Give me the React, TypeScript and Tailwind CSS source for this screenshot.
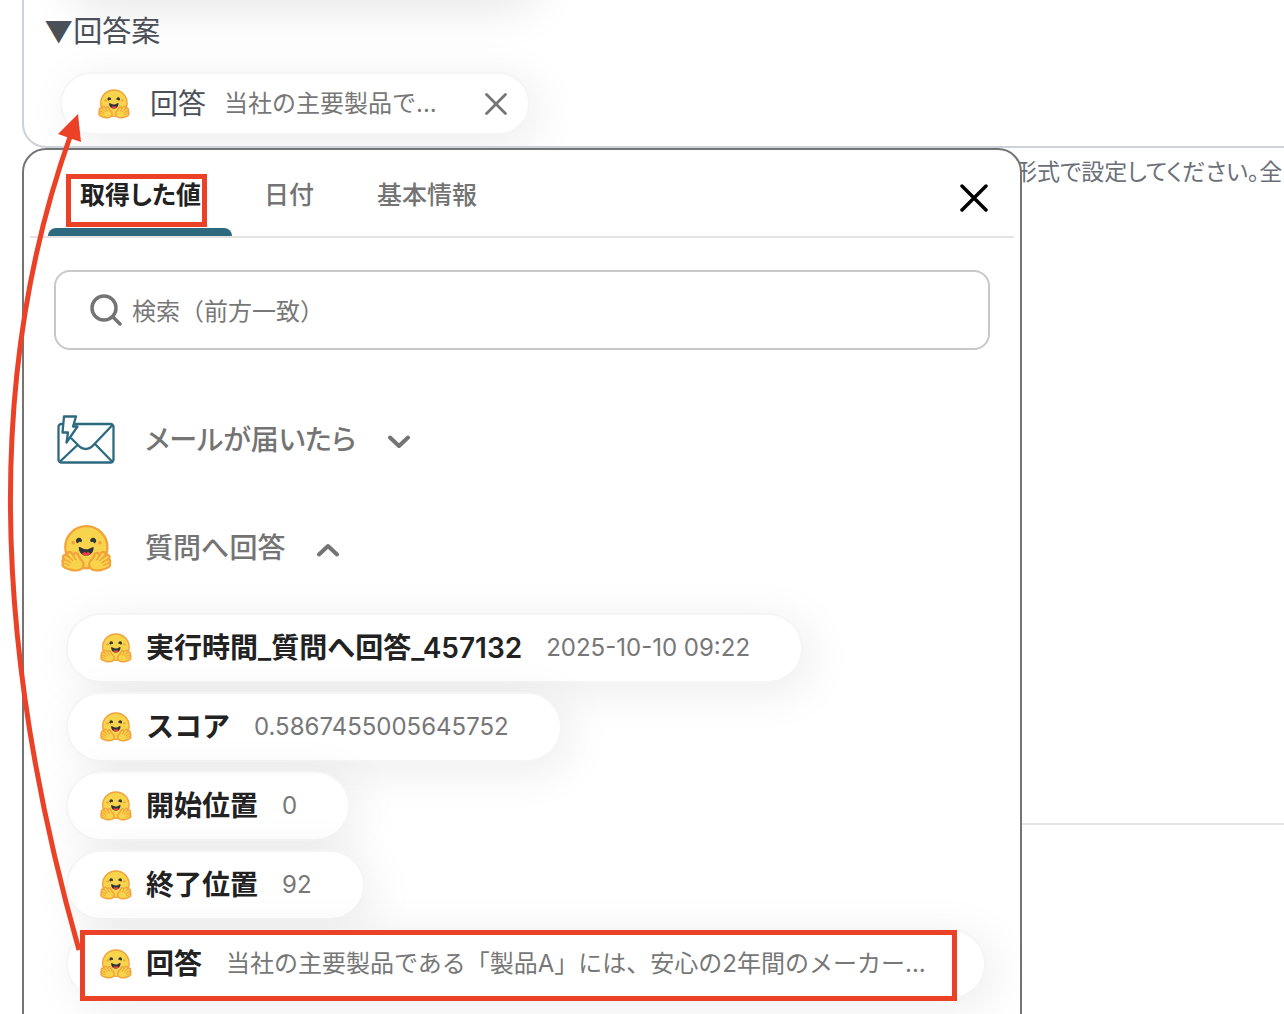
import { useState } from 'react';
import type { ReactNode } from 'react';

type OutputValue = { label: string; value: string };

const TABS = ['取得した値', '日付', '基本情報'];

const OUTPUTS: OutputValue[] = [
  { label: '実行時間_質問へ回答_457132', value: '2025-10-10 09:22' },
  { label: 'スコア', value: '0.5867455005645752' },
  { label: '開始位置', value: '0' },
  { label: '終了位置', value: '92' },
  { label: '回答', value: '当社の主要製品である「製品A」には、安心の2年間のメーカー...' },
];

function HuggingHand() {
  return (
    <>
      <path
        fill="#f2a33c"
        d="M17.52 48c-1.62 0-3.06.66-4.07 1.87a5.97 5.97 0 0 0-1.33 3.76 7.1 7.1 0 0 0-1.94-.3c-1.55 0-2.95.59-3.94 1.66a5.8 5.8 0 0 0-.8 7 5.3 5.3 0 0 0-1.79 2.82c-.24.9-.48 2.8.8 4.74a5.22 5.22 0 0 0-.37 5.02c1.02 2.32 3.57 4.14 8.52 6.1 3.07 1.22 5.89 2 5.91 2.01a44.33 44.33 0 0 0 10.93 1.6c5.86 0 10.05-1.8 12.46-5.34 3.88-5.69 3.33-10.9-1.7-15.92-2.77-2.78-4.62-6.87-5-7.77-.78-2.66-2.84-5.62-6.25-5.62a5.7 5.7 0 0 0-4.6 2.46c-1-1.26-1.98-2.25-2.86-2.82A7.4 7.4 0 0 0 17.52 48Z"
      />
      <path
        fill="#f8d44c"
        d="M38.6 76.69c2.75-4.04 2.55-7.07-1.22-10.84-3.78-3.77-5.98-9.3-5.98-9.3s-.82-3.2-2.69-2.9c-1.87.3-3.24 5.08.68 8.01 3.91 2.93-.78 4.92-2.29 2.17-1.5-2.75-5.62-9.82-7.76-11.18-2.13-1.35-3.63-.6-3.13 2.2.5 2.79 9.43 9.55 8.56 11-.87 1.47-3.93-1.71-3.93-1.71s-9.57-8.71-11.66-6.44c-2.08 2.27 1.59 4.17 6.8 7.33 5.23 3.16 5.64 4 4.9 5.2-.75 1.2-12.28-8.53-13.36-4.4-1.08 4.11 11.77 5.3 10.98 8.15-.8 2.85-9.06-5.38-10.74-2.18-1.7 3.21 11.65 6.98 11.76 7.01 4.3 1.12 15.25 3.49 19.08-2.12Z"
      />
    </>
  );
}

function HuggingFaceIcon({ className }: { className: string }) {
  return (
    <svg viewBox="3 3 89 82" className={className} aria-hidden="true">
      <circle cx="47.2" cy="41.75" r="36.75" fill="#f8d44c" stroke="#f2a33c" strokeWidth="4" />
      <path
        fill="#30333a"
        d="M58.5 32.3c1.28.44 1.78 3.06 3.07 2.38a5 5 0 1 0-6.76-2.07c.61 1.15 2.55-.72 3.7-.32ZM34.95 32.3c-1.28.44-1.79 3.06-3.07 2.38a5 5 0 1 1 6.76-2.07c-.61 1.15-2.56-.72-3.7-.32Z"
      />
      <path
        fill="#30333a"
        d="M46.96 56.29c9.83 0 13-8.76 13-13.26 0-2.34-1.57-1.6-4.09-.36-2.33 1.15-5.46 2.74-8.9 2.74-7.19 0-13-6.88-13-2.38s3.16 13.26 13 13.26Z"
      />
      <path
        fill="#ef3e4a"
        d="M39.43 54a8.7 8.7 0 0 1 5.3-4.49c.4-.12.81.57 1.24 1.28.4.68.82 1.37 1.24 1.37.45 0 .9-.68 1.33-1.35.45-.7.89-1.38 1.32-1.25a8.61 8.61 0 0 1 5 4.17c-2 1.6-4.6 2.56-7.9 2.56-3.2 0-5.6-.9-7.53-2.29Z"
      />
      <circle cx="70.7" cy="33.75" r="3.25" fill="#f2a33c" />
      <circle cx="24.2" cy="33.75" r="3.25" fill="#f2a33c" />
      <HuggingHand />
      <g transform="translate(94.4 0) scale(-1 1)">
        <HuggingHand />
      </g>
    </svg>
  );
}

function MailIcon() {
  return (
    <svg viewBox="0 0 58 50" className="h-[50px] w-[58px]" fill="none" stroke="#2d6a80" strokeWidth="2.3" strokeLinejoin="round" aria-hidden="true">
      <rect x="1.5" y="9" width="55" height="38.5" rx="3" />
      <path d="M2.5 47l18-17M55.5 47L38 29M55.5 10L37 29.5c-5 6-11.5 6-16.500 0L14 23" />
      <path d="M7 1.5h12L16 11.5h4.5L9.5 27.5l1.5-10H5.5z" fill="#fff" />
    </svg>
  );
}

function CloseIcon({ className }: { className: string }) {
  return (
    <svg viewBox="0 0 28 28" className={className} fill="none" stroke="currentColor" strokeWidth="3.5" strokeLinecap="round" aria-hidden="true">
      <path d="M2 2l24 24M26 2L2 26" />
    </svg>
  );
}

function Section({ icon, title, open, onToggle }: { icon: ReactNode; title: string; open: boolean; onToggle: () => void }) {
  return (
    <button type="button" onClick={onToggle} aria-expanded={open} className="flex h-[50px] items-center text-left">
      <span className="flex w-[58px] justify-center">{icon}</span>
      <span className="ml-[30px] text-[28px] leading-10 font-medium [font-feature-settings:'palt']">{title}</span>
      <svg viewBox="0 0 22 14" className={`ml-8 mt-1 h-3.5 w-[22px] ${open ? 'rotate-180' : ''}`} fill="none" stroke="currentColor" strokeWidth="4" strokeLinecap="round" strokeLinejoin="round" aria-hidden="true">
        <path d="M2 2.5l9 8.5 9-8.5" />
      </svg>
    </button>
  );
}

function OutputPill({ label, value }: OutputValue) {
  return (
    <button
      type="button"
      className="flex h-[70px] items-center rounded-full border-2 border-[#f5f5f5] bg-white pr-[51px] pl-8 whitespace-nowrap shadow-[8px_8px_48px_rgba(0,0,0,0.08)] last:pr-[58px]"
    >
      <HuggingFaceIcon className="h-[30px] w-8" />
      <span className="ml-3.5 text-[28px] font-semibold text-[#222]">{label}</span>
      <span className="ml-6 text-2xl text-[#777]">{value}</span>
    </button>
  );
}

export default function App() {
  const [tab, setTab] = useState(0);
  const [mailOpen, setMailOpen] = useState(false);
  const [answerOpen, setAnswerOpen] = useState(true);

  return (
    <main lang="ja" className="relative h-screen overflow-hidden bg-white font-[Inter,'Noto_Sans_CJK_JP',sans-serif] text-[#747474]">
      {/* Message body editor */}
      <section className="ml-[22px] h-[148px] overflow-hidden rounded-bl-3xl border-b-2 border-l-2 border-[#cdd2d8] pl-9">
        <div className="-mt-[62px] h-[62px] w-[470px] rounded-full shadow-[8px_8px_48px_rgba(0,0,0,0.10)]" />
        <p className="-ml-4 pt-3 text-[29px] leading-10 text-[#4b5058]">▼回答案</p>
        <div className="mt-5 flex h-[63px] w-[470px] items-center rounded-full border-2 border-[#f5f5f5] bg-white pr-[21px] pl-9 whitespace-nowrap shadow-[8px_8px_48px_rgba(0,0,0,0.08)]">
          <HuggingFaceIcon className="h-[30px] w-8" />
          <span className="ml-5 text-[28px] text-[#4b5058]">回答</span>
          <span className="ml-[18px] text-2xl text-[#777]">当社の主要製品で...</span>
          <button type="button" aria-label="削除" className="ml-auto">
            <CloseIcon className="size-[22px]" />
          </button>
        </div>
      </section>
      <p className="pt-2 pl-[1014px] text-[23px] leading-8 whitespace-nowrap text-[#6b7078] [font-feature-settings:'palt']">
        形式で設定してください。全
      </p>
      <hr className="mt-[635px] ml-[22px] border-t-2 border-[#e5e5e5]" />

      {/* Value picker popup */}
      <section className="absolute top-[148px] -bottom-8 left-[22px] w-[1000px] rounded-3xl border-2 border-[#747474] bg-white px-1.5">
        <header className="flex items-start justify-between border-b-2 border-[#e3e3e3] pr-[26px] pl-[18px]">
          <div role="tablist" className="flex">
            {TABS.map((name, i) => (
              <button
                key={name}
                type="button"
                role="tab"
                aria-selected={tab === i}
                onClick={() => setTab(i)}
                className={`flex flex-col text-[25px] [font-feature-settings:'palt'] ${tab === i ? 'font-semibold text-[#222]' : 'font-medium'}`}
              >
                <span className="flex h-[78px] items-center pt-3.5 pr-[31px] pl-8">{name}</span>
                <span className={`h-2 w-full rounded-t-lg ${tab === i ? 'bg-[#2d6a80]' : ''}`} />
              </button>
            ))}
          </div>
          <button type="button" aria-label="閉じる" className="mt-[34px] text-black">
            <CloseIcon className="size-7" />
          </button>
        </header>

        <div className="px-6 pt-8">
          <label className="flex h-20 items-center gap-2.5 rounded-2xl border-2 border-[#c8c8c8] px-[34px]">
            <svg viewBox="0 0 32 32" className="size-8 shrink-0" fill="none" stroke="currentColor" strokeWidth="3.5" strokeLinecap="round" aria-hidden="true">
              <circle cx="14" cy="14" r="12" />
              <path d="M23 23l7 7" />
            </svg>
            <input
              type="text"
              aria-label="検索"
              placeholder="検索（前方一致）"
              className="min-w-0 flex-1 pt-1 text-2xl outline-none placeholder:text-[#777]"
            />
          </label>
        </div>

        <div className="flex flex-col items-start gap-[58px] pt-[65px] pl-[27px]">
          <Section icon={<MailIcon />} title="メールが届いたら" open={mailOpen} onToggle={() => setMailOpen(!mailOpen)} />
          <Section
            icon={<HuggingFaceIcon className="h-[47px] w-[51px]" />}
            title="質問へ回答"
            open={answerOpen}
            onToggle={() => setAnswerOpen(!answerOpen)}
          />
        </div>

        {answerOpen && (
          <div className="flex flex-col items-start gap-[9px] pt-10 pl-9">
            {OUTPUTS.map(o => (
              <OutputPill key={o.label} {...o} />
            ))}
          </div>
        )}
      </section>

      {/* Annotations over the screen */}
      <div className="pointer-events-none absolute top-[174px] left-[66px] h-[53px] w-[141px] border-5 border-[#ea4127]" />
      <div className="pointer-events-none absolute top-[930px] left-[80px] h-[71px] w-[877px] border-5 border-[#ea4127]" />
      <svg viewBox="0 0 100 1014" className="pointer-events-none absolute top-0 left-0 h-[1014px] w-[100px]" aria-hidden="true">
        <path d="M79 950Q-54 482 71 134" fill="none" stroke="#ea4127" strokeWidth="5" />
        <path d="M78 114L58 134L81 142z" fill="#ea4127" />
      </svg>
    </main>
  );
}
